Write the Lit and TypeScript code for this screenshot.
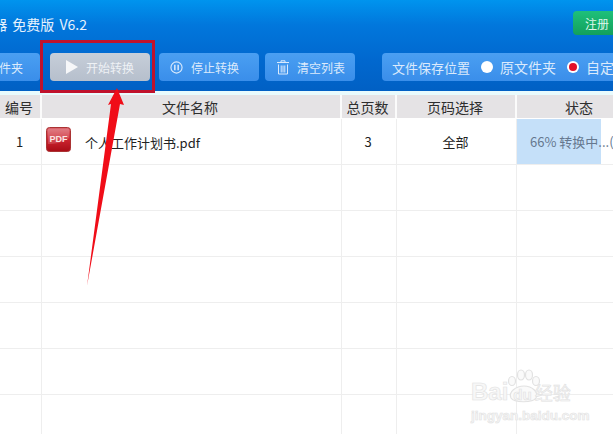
import { LitElement, html, css, svg } from "lit";
import { customElement } from "lit/decorators.js";

const COLS = [42, 300, 55, 120, 128];

@customElement("app-root")
export class AppRoot extends LitElement {
  static styles = css`
    :host { display: block; width: 613px; height: 434px; overflow: hidden; position: relative; background: #fff; font-family: "Noto Sans CJK SC", "Noto Sans", sans-serif; font-size: 13px; color: #333; }
    .head { height: 91px; box-sizing: border-box; background: linear-gradient(#0094ee 0, #0177dc 25px, #0168cf 60px, #0160c4 91px); display: flex; flex-direction: column; }
    .top { height: 53px; display: flex; justify-content: space-between; flex: none; }
    .title { width: 87px; height: 48px; display: flex; justify-content: flex-end; align-items: center; overflow: hidden; white-space: pre; word-spacing: 2px; color: #e6f2fd; font-size: 14px; flex: none; }
    .reg { width: 40px; height: 24px; margin-top: 11px; background: linear-gradient(#1ec07a, #12a05c); border-radius: 4px 0 0 4px; color: #dff7ea; font-size: 12px; display: flex; align-items: center; padding-left: 12px; box-sizing: border-box; }
    .tools { display: flex; height: 28px; flex: none; }
    .btn { height: 28px; border-radius: 4px; background: linear-gradient(#4a9ff2, #3a8eea); color: #dbeafc; display: flex; align-items: center; box-sizing: border-box; white-space: nowrap; flex: none; font-size: 12px; }
    .b0 { width: 40px; margin-right: 10px; border-radius: 0 4px 4px 0; justify-content: flex-end; padding-right: 17px; overflow: hidden; }
    .b1 { width: 100px; margin-right: 9px; padding-left: 16px; gap: 8px; background: linear-gradient(#c6ced9, #b6bfcc); color: #eef1f5; }
    .b2 { width: 100px; margin-right: 6px; padding-left: 11px; gap: 8px; }
    .b3 { width: 90px; margin-right: 27px; padding-left: 12px; gap: 8px; }
    .b4 { width: 240px; border-radius: 4px 0 0 4px; padding-left: 10px; font-size: 13px; }
    .opt { font-size: 14px; }
    .radio { width: 12px; height: 12px; border-radius: 50%; background: #fff; margin: 0 7px 0 11px; display: flex; align-items: center; justify-content: center; flex: none; }
    .radio i { width: 8px; height: 8px; border-radius: 50%; background: #e3102a; display: block; }
    .gap { height: 4px; background: #e9fbfd; }
    .thead { display: flex; background: #fff; padding-bottom: 1px; }
    .th { background: #e5e3e5; height: 23px; padding-right: 2px; display: flex; align-items: center; justify-content: center; color: #2e2e2e; font-size: 14px; border-right: 2px solid #fbfbfb; box-sizing: border-box; flex: none; white-space: nowrap; }
    .row { display: flex; height: 46px; border-bottom: 1px solid #eeeeee; box-sizing: border-box; }
    .td { height: 45px; padding-right: 2px; border-right: 1px solid #eeeeee; box-sizing: border-box; display: flex; align-items: center; justify-content: center; flex: none; color: #222; overflow: hidden; white-space: nowrap; }
    .name { justify-content: flex-start; padding-left: 4px; gap: 14px; align-items: flex-start; padding-top: 8px; }
    .name span { margin-top: 6px; }
    .status { border-right: none; padding-right: 0; justify-content: flex-start; color: #66788f; }
    .prog { width: 84px; height: 45px; background: #c5e0f9; flex: none; display: flex; align-items: center; padding-left: 13px; box-sizing: border-box; overflow: visible; white-space: nowrap; }
    .over { position: absolute; left: 0; top: 0; pointer-events: none; }
    .redbox { position: absolute; left: 40px; top: 40px; width: 115px; height: 53px; border: 3px solid #c0122c; box-sizing: border-box; }
    .wm { position: absolute; left: 471px; top: 380px; color: #f7f7f7; -webkit-text-stroke: .6px #e2e2e2; font-family: "Liberation Sans", sans-serif; line-height: 1; white-space: nowrap; }
    .wm1 { font-size: 24px; font-weight: 700; display: flex; align-items: baseline; }
    .wm1 small { font-size: 15px; margin-left: 5px; }
    .wm1 em { font-style: normal; font-size: 18px; font-family: "Noto Sans CJK SC", sans-serif; font-weight: 400; margin-left: 3px; }
    .wm2 { font-size: 13.500px; font-weight: 700; margin-top: 5px; }
  `;

  private pdfIcon() {
    return html`<svg width="25" height="25" viewBox="0 0 25 25">
      <defs>
        <linearGradient id="p" x1="0" y1="0" x2="0" y2="1"><stop offset="0" stop-color="#dc6a72"/><stop offset=".5" stop-color="#cc2430"/><stop offset="1" stop-color="#a80c16"/></linearGradient>
      </defs>
      <rect x=".5" y=".5" width="24" height="24" rx="3" fill="url(#p)" stroke="#a33"/>
      <path d="M2 2h21v9C16 16 8 17 2 17z" fill="#fff" opacity=".16"/>
      <text x="12.500" y="15" text-anchor="middle" font-family="Liberation Sans" font-weight="700" font-size="9" fill="#fbe4e4">PDF</text>
    </svg>`;
  }

  render() {
    const empty = [0, 1, 2, 3, 4, 5];
    return html`
      <div class="head">
        <div class="top">
          <div class="title">PDF转换器 免费版 V6.2</div>
          <div class="reg">注册</div>
        </div>
        <div class="tools">
          <div class="btn b0">件夹</div>
          <div class="btn b1">
            <svg width="12" height="14" viewBox="0 0 12 14"><path d="M0 0L12 7 0 14z" fill="#f6f7f9"/></svg>
            开始转换
          </div>
          <div class="btn b2">
            <svg width="13" height="13" viewBox="0 0 14 14" fill="none" stroke="#dbeafc"><circle cx="7" cy="7" r="6" stroke-width="1.2"/><path d="M5.200 4v6M8.800 4v6" stroke-width="1.600"/></svg>
            停止转换
          </div>
          <div class="btn b3">
            <svg width="12" height="15" viewBox="0 0 12 15" fill="none" stroke="#dbeafc" stroke-width="1"><path d="M0 2.500h12M4 2.500V.8h4v1.700M1.500 4.500v9.500h9V4.500M4.200 5.500v7M6 5.500v7M7.800 5.500v7"/></svg>
            清空列表
          </div>
          <div class="btn b4">
            文件保存位置
            <span class="radio"></span><span class="opt">原文件夹</span>
            <span class="radio"><i></i></span><span class="opt">自定义</span>
          </div>
        </div>
      </div>
      <div class="gap"></div>
      <div class="thead">
        ${["编号", "文件名称", "总页数", "页码选择", "状态"].map(
          (t, i) => html`<div class="th" style="width:${COLS[i]}px">${t}</div>`
        )}
      </div>
      <div class="row">
        <div class="td" style="width:${COLS[0]}px">1</div>
        <div class="td name" style="width:${COLS[1]}px">${this.pdfIcon()}<span>个人工作计划书.pdf</span></div>
        <div class="td" style="width:${COLS[2]}px">3</div>
        <div class="td" style="width:${COLS[3]}px">全部</div>
        <div class="td status" style="width:${COLS[4]}px"><div class="prog">66% 转换中...(</div></div>
      </div>
      ${empty.map(
        () => html`<div class="row">${COLS.map(
          (w, i) => html`<div class="td ${i === 4 ? "status" : ""}" style="width:${w}px"></div>`
        )}</div>`
      )}
      <div class="redbox"></div>
      <svg class="over" width="613" height="434" viewBox="0 0 613 434">
        ${svg`<path d="M117 88L124 105 120 104 87 286 111 104 108 105z" fill="#f00d18"/>`}
        ${svg`<g fill="#fafafa" stroke="#e2e2e2" stroke-width="1.200">
          <ellipse cx="512" cy="381" rx="3.500" ry="4.500"/><ellipse cx="521" cy="375" rx="3.500" ry="5"/><ellipse cx="529" cy="375" rx="3.500" ry="5"/><ellipse cx="536" cy="381" rx="3.500" ry="4.500"/>
          <path d="M511 398c-3-6 5-12 13-12s15 6 12 12c-3 5-22 5-25 0z"/>
        </g>`}
      </svg>
      <div class="wm">
        <div class="wm1">Bai<small>du</small><em>经验</em></div>
        <div class="wm2">jingyan.baidu.com</div>
      </div>
    `;
  }
}
